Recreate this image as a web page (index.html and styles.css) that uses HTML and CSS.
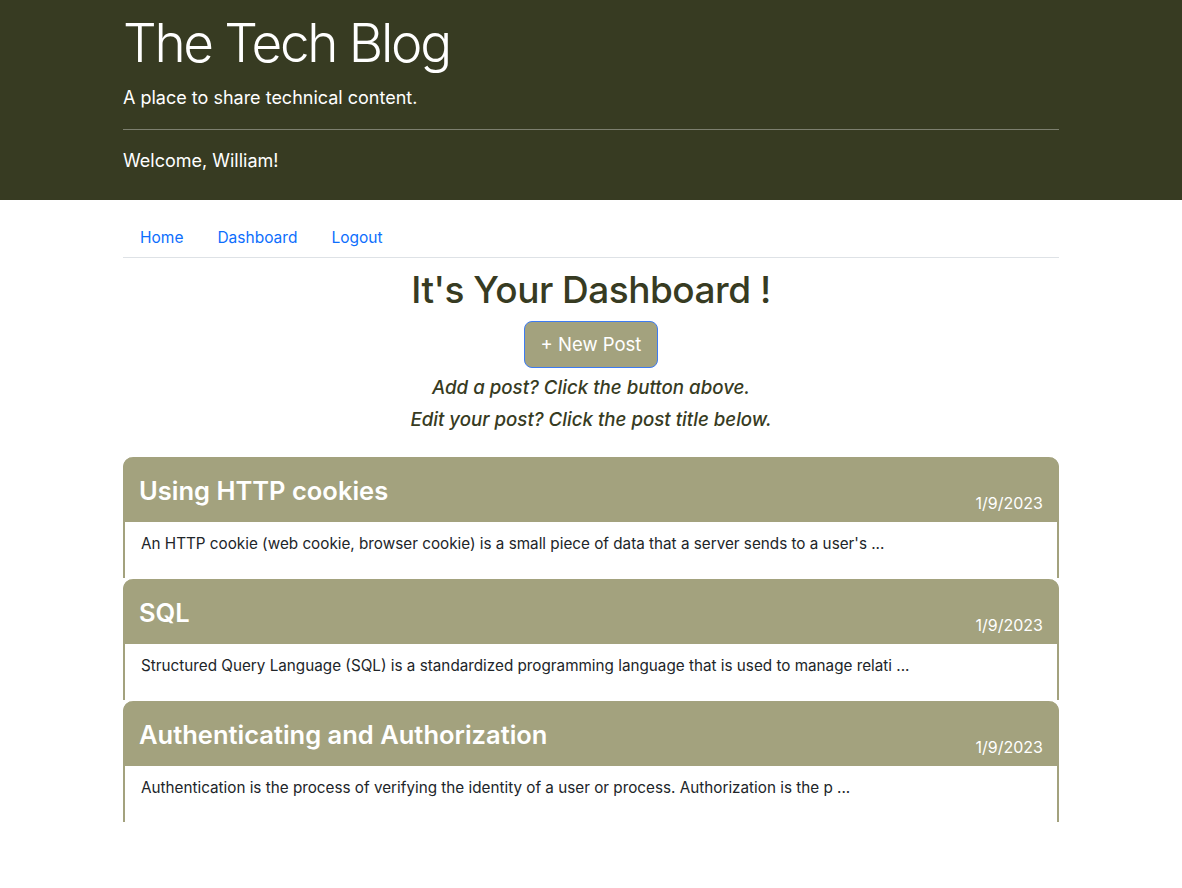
FILE: index.html
```html
<!DOCTYPE html>
<html lang="en">
<head>
<meta charset="utf-8">
<title>The Tech Blog</title>
<link rel="stylesheet" href="styles.css">
</head>
<body>
<header class="site-header">
  <div class="container">
    <h1 class="brand">The Tech Blog</h1>
    <p class="lead">A place to share technical content.</p>
    <hr class="divider">
    <p class="welcome">Welcome, William!</p>
  </div>
</header>
<main class="container">
  <nav class="nav">
    <a class="nav-link" href="#">Home</a>
    <a class="nav-link" href="#">Dashboard</a>
    <a class="nav-link" href="#">Logout</a>
  </nav>
  <section class="intro">
    <h2 class="page-title">It's Your Dashboard !</h2>
    <button class="btn-new" type="button">+ New Post</button>
    <p class="hint">Add a post? Click the button above.</p>
    <p class="hint">Edit your post? Click the post title below.</p>
  </section>
  <section class="posts">
    <article class="card">
      <div class="card-header">
        <h3 class="card-title">Using HTTP cookies</h3>
        <span class="card-date">1/9/2023</span>
      </div>
      <div class="card-body">An HTTP cookie (web cookie, browser cookie) is a small piece of data that a server sends to a user's ...</div>
    </article>
    <article class="card">
      <div class="card-header">
        <h3 class="card-title">SQL</h3>
        <span class="card-date">1/9/2023</span>
      </div>
      <div class="card-body">Structured Query Language (SQL) is a standardized programming language that is used to manage relati ...</div>
    </article>
    <article class="card">
      <div class="card-header">
        <h3 class="card-title">Authenticating and Authorization</h3>
        <span class="card-date">1/9/2023</span>
      </div>
      <div class="card-body">Authentication is the process of verifying the identity of a user or process. Authorization is the p ...</div>
    </article>
  </section>
</main>
</body>
</html>
```
FILE: styles.css
```css
* { box-sizing: border-box; }
body {
  margin: 0;
  font-family: Inter, "Liberation Sans", Arial, sans-serif;
  font-size: 16px;
  line-height: 1.5;
  color: #212529;
  background: #fff;
}
.container {
  width: 936px;
  margin: 0 auto;
}
.site-header {
  background: #373b22;
  color: #fff;
  padding: 10px 0 24px;
}
.brand {
  margin: 0 0 8px;
  font-size: 53px;
  font-weight: 300;
  letter-spacing: -2.3px;
  line-height: 1.25;
}
.lead {
  margin: 0;
  font-size: 18px;
  font-weight: 400;
  line-height: 28px;
}
.divider {
  margin: 17px 0 16px;
  border: 0;
  border-top: 1px solid rgba(255,255,255,0.35);
}
.welcome {
  margin: 0;
  font-size: 18px;
  line-height: 30px;
}
.nav {
  display: flex;
  margin-top: 17px;
  border-bottom: 1px solid #dee2e6;
}
.nav-link {
  display: block;
  padding: 9px 17px 7px 17px;
  color: #0d6efd;
  text-decoration: none;
  font-size: 15.5px;
  line-height: 24px;
}
.intro {
  display: flex;
  flex-direction: column;
  align-items: center;
}
.page-title {
  margin: 8px 0 7px;
  font-size: 37px;
  font-weight: 500;
  letter-spacing: -0.5px;
  line-height: 48px;
  color: #373b22;
}
.btn-new {
  font-family: inherit;
  background: #a3a27e;
  color: #fff;
  border: 1px solid #3d7bf2;
  border-radius: 8px;
  padding: 8px 16px;
  font-size: 18.5px;
  line-height: 29px;
  margin-bottom: 4px;
}
.hint {
  margin: 0;
  font-size: 18.7px;
  font-style: italic;
  font-weight: 500;
  line-height: 32px;
  color: #373b22;
}
.posts {
  margin-top: 21px;
}
.card {
  border-left: 2px solid #a3a27e;
  border-right: 2px solid #a3a27e;
  border-radius: 10px 10px 0 0;
  margin-bottom: 1.4px;
}
.card-header {
  display: flex;
  justify-content: space-between;
  align-items: flex-end;
  background: #a3a27e;
  color: #fff;
  border-radius: 10px 10px 0 0;
  margin: 0 -2px;
  padding: 16px 16px 7px;
  height: 64.5px;
}
.card-title {
  margin: 0 0 7px;
  font-size: 25.5px;
  font-weight: 600;
  line-height: 33.5px;
}
.card-date {
  font-size: 16px;
  line-height: 24px;
}
.card-body {
  padding: 10px 16px 22px;
  height: 56px;
  font-size: 15.25px;
  line-height: 24px;
}
```
